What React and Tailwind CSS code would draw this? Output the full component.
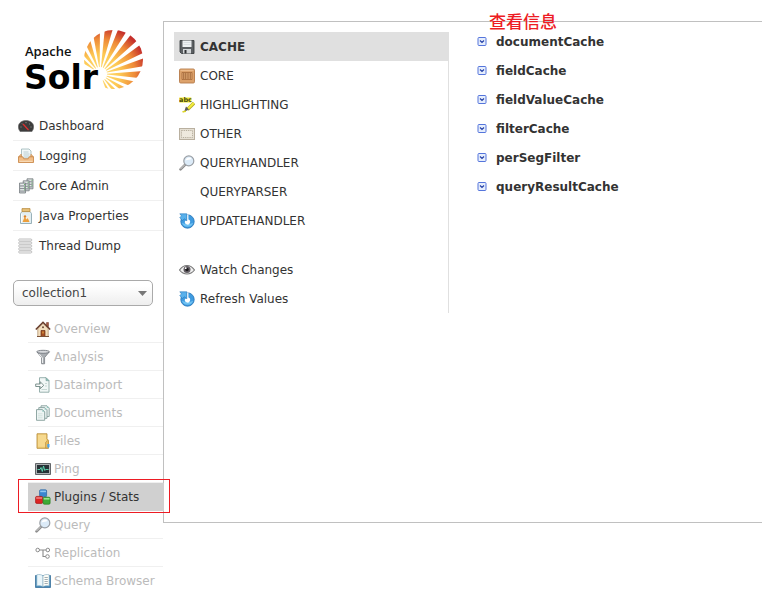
import React from "react";

const rad = (deg) => (deg * Math.PI) / 180;

function Logo() {
  const fx = 87;
  const fy = 54;
  const angles = [-143, -127, -111, -95, -79, -63, -47, -31, -15, 1, 17, 33, 49, 65];
  const ray = (a) => {
    const p = (r, d) =>
      `${(fx + r * Math.cos(rad(d))).toFixed(2)},${(fy + r * Math.sin(rad(d))).toFixed(2)}`;
    return `${p(7, a - 3)} ${p(70, a - 5)} ${p(70, a + 5)} ${p(7, a + 3)}`;
  };
  return (
    <svg width="150" height="91" viewBox="0 0 150 91" role="img" aria-label="Apache Solr">
      <defs>
        <radialGradient id="sun" gradientUnits="userSpaceOnUse" cx={fx} cy={fy} r="50">
          <stop offset="0" stopColor="#ffe07a" />
          <stop offset="0.4" stopColor="#fdc853" />
          <stop offset="0.7" stopColor="#ee8a38" />
          <stop offset="0.95" stopColor="#c52f2b" />
        </radialGradient>
        <clipPath id="disc">
          <circle cx="100.500" cy="39.500" r="29.500" />
        </clipPath>
      </defs>
      <g clipPath="url(#disc)" fill="url(#sun)">
        {angles.map((a) => (
          <polygon key={a} points={ray(a)} />
        ))}
      </g>
      <text x="12" y="36" fontSize="13" fontFamily="'Open Sans', 'DejaVu Sans', sans-serif" fontWeight="600" fill="#111">
        Apache
      </text>
      <text x="11" y="69" fontSize="33" fontFamily="'DejaVu Sans', sans-serif" fontWeight="700" fill="#000" stroke="#fff" strokeWidth="2" paintOrder="stroke">
        Solr
      </text>
    </svg>
  );
}

function Icon({ children, size = 16 }) {
  return (
    <svg width={size} height={size} viewBox="0 0 16 16" fill="none" className="shrink-0" aria-hidden="true">
      {children}
    </svg>
  );
}

const DashboardIcon = () => (
  <Icon>
    <path d="M2 13.5A8 8 0 0 1 .3 9C.3 5 3.600 2.500 8 2.500s7.700 2.500 7.700 6.500A8 8 0 0 1 14 13.500z" fill="#3c3c3c" stroke="#6a6a6a" strokeWidth=".6" />
    <path d="M2.500 9h1M4 5.500l.8.8M8 4v1.200M12 5.500l-.8.8M13.500 9h-1" stroke="#aaa" strokeWidth=".8" />
    <path d="M5 6l5.500 6" stroke="#e03030" strokeWidth="1.200" />
    <path d="M2 13.500h12" stroke="#777" strokeWidth=".8" />
  </Icon>
);
const LoggingIcon = () => (
  <Icon>
    <path d="M3.500 1h7.500l2 2v7H3.500z" fill="#f3f8f8" stroke="#9bb5b8" strokeWidth=".8" />
    <path d="M5.500 4h5M5.500 6h6M5.500 8h6" stroke="#a9c2c6" strokeWidth=".8" />
    <path d="M.5 9L2.500 6.500h1V9M15.500 9l-2-2.500h-.7V9" fill="#e7b27c" stroke="#c98d52" strokeWidth=".6" />
    <path d="M.5 8.800h4.300l1 2h4.400l1-2h4.300v5.700H.5z" fill="#f1bd86" stroke="#c5823f" strokeWidth=".8" />
    <path d="M1.500 13.300h13" stroke="#fae0c0" />
  </Icon>
);
const Tower = ({ x, y }) => (
  <g transform={`translate(${x} ${y})`}>
    <path d="M.5.5h6v10h-6z" fill="#c9cdd0" stroke="#777d82" strokeWidth=".8" />
    <path d="M1 3.500h5M1 6h5M1 8.500h5" stroke="#7b8287" strokeWidth=".8" />
    <path d="M1.500 2h3.500M1.500 4.800h3.500M1.500 7.300h3.500" stroke="#edf0f1" strokeWidth=".8" />
    <path d="M5 2h1M5 4.800h1M5 7.300h1" stroke="#55b457" strokeWidth=".8" />
  </g>
);
const CoreAdminIcon = () => (
  <Icon>
    <Tower x={8.500} y={0.300} />
    <Tower x={4.700} y={2.300} />
    <Tower x={1} y={4.500} />
  </Icon>
);
const JavaIcon = () => (
  <Icon>
    <path d="M4 3.500h8l1.500 2v10h-11v-10z" fill="#e2eef2" stroke="#8fa9b1" strokeWidth=".9" />
    <path d="M4 .6h8v3H4z" fill="#e8c178" stroke="#b88c3d" strokeWidth=".8" />
    <path d="M4.500 8h7v6h-7z" fill="#f6eee0" />
    <path d="M4.500 14l2.200-5 2 2.500 1-1.500 1.800 4z" fill="#ec9f3c" />
    <circle cx="7" cy="8.500" r="1.200" fill="#d9822b" />
    <path d="M3.700 6v8.500" stroke="#fff" />
  </Icon>
);
const ThreadIcon = () => (
  <Icon>
    {[1, 4, 7, 10, 13].map((y) => (
      <path key={y} d={`M1.500 ${y}h11.500c1.500.4 1 2-.5 2h-11c-1.200-.3-1.200-1.700 0-2z`} fill="#fafafa" stroke="#a5a5a5" strokeWidth=".7" />
    ))}
  </Icon>
);
const HouseIcon = () => (
  <Icon>
    <path d="M11.500 1.500h2v4h-2z" fill="#a5563f" stroke="#713625" strokeWidth=".5" />
    <path d="M2.800 7.500L8 2.500l5.200 5v8H2.800z" fill="#f3dfbf" stroke="#a98762" strokeWidth=".7" />
    <path d="M.8 8.500L8 1.300l7.200 7.200" stroke="#673b2a" strokeWidth="1.500" />
    <path d="M6 9.500h4v6H6z" fill="#a34f25" stroke="#6b3015" strokeWidth=".7" />
    <path d="M7.500 10.500h1v2h-1z" fill="#f5b84a" />
    <circle cx="8" cy="6.300" r="1" fill="#6d4b3a" />
    <path d="M2 15.500h12" stroke="#7a5238" />
  </Icon>
);
const FunnelIcon = () => (
  <Icon>
    <path d="M2 3l4.600 5.500v6.300h3V8.500L14.200 3z" fill="#a9adb1" stroke="#777c82" strokeWidth=".8" />
    <path d="M4.300 5l3.200 4v5" stroke="#eceeef" />
    <ellipse cx="8.100" cy="2.800" rx="6.400" ry="1.500" fill="#d8dadd" stroke="#777c82" strokeWidth=".9" />
  </Icon>
);
const ImportIcon = () => (
  <Icon>
    <path d="M4.500.7h6.500l3 3v11.500H4.500z" fill="#f1f7f6" stroke="#8ca8a5" strokeWidth=".9" />
    <path d="M11 .7v3h3z" fill="#8fc6bf" stroke="#789b96" strokeWidth=".6" />
    <path d="M6.500 12.500h5.500M10 6.500h2M10 9h2" stroke="#bccfcc" strokeWidth=".8" />
    <path d="M.7 7h4.500V4.800l3.600 3.500-3.600 3.400V9.500H.7z" fill="#f8fafa" stroke="#6f8782" strokeWidth=".9" />
  </Icon>
);
const DocsIcon = () => (
  <Icon>
    {[[5.500, 0], [3.300, 1.800], [1, 3.800]].map(([x, y]) => (
      <g key={x} transform={`translate(${x} ${y})`}>
        <path d="M.5.8h6l2.200 2.200v8.500H.5z" fill="#eef5f4" stroke="#849e9b" strokeWidth=".9" />
        <path d="M6.300.8V3h2.200z" fill="#95c8c1" />
        <path d="M2 5h4.500M2 7h4.500M2 9h4.500" stroke="#c7d8d6" strokeWidth=".7" />
      </g>
    ))}
  </Icon>
);
const FilesIcon = () => (
  <Icon>
    <path d="M2 .8h10v5l1.500 1.500v8H2z" fill="#f1cc75" stroke="#ba9141" strokeWidth=".9" />
    <path d="M3 1.800h8v12H3z" fill="#f6d98f" />
    <path d="M10.500 15V9.500l2-2 1 1V15z" fill="#e5b95a" stroke="#b78f42" strokeWidth=".6" />
    <path d="M12.300 11h2.200v3l-1.100 1-1.100-1z" fill="#4ea4ec" />
  </Icon>
);
const PingIcon = () => (
  <Icon>
    <path d="M.5 2.500h15v11H.5z" fill="#aeb1b3" stroke="#55595c" strokeWidth=".9" />
    <path d="M2 4h12v8H2z" fill="#273236" />
    <path d="M2.500 8.500h2.500l1-2 1.300 4L8.500 5l1.300 4.500.8-1h3" stroke="#5cdcb5" strokeWidth=".9" />
  </Icon>
);
const Block = ({ x, y, top, face, edge }) => (
  <g transform={`translate(${x} ${y})`}>
    <rect x=".4" y=".4" width="7" height="7" rx="1.200" fill={face} stroke={edge} strokeWidth=".7" />
    <path d="M1 1.200h5.800v1.600H1z" fill={top} />
  </g>
);
const BlocksIcon = () => (
  <Icon>
    <Block x={4.200} y={0.400} top="#90c7f2" face="#3b86d1" edge="#2a64a3" />
    <Block x={0.200} y={7} top="#f27d7d" face="#dd2525" edge="#a51616" />
    <Block x={7.700} y={7.800} top="#9be38d" face="#3cab35" edge="#27801f" />
  </Icon>
);
const LensIcon = () => (
  <Icon>
    <path d="M1.500 14.300L6 9.800" stroke="#8c8c8c" strokeWidth="2.600" strokeLinecap="round" />
    <path d="M1.700 13.800L5.700 9.800" stroke="#d5d5d5" strokeLinecap="round" />
    <circle cx="9.800" cy="5.900" r="5" fill="#dcebf8" stroke="#9a9fa5" strokeWidth="1.200" />
    <path d="M6.500 5.500a3.500 3.500 0 0 1 6-1.800c-1.500 1.700-3.700.7-6 1.800z" fill="#fff" />
  </Icon>
);
const ReplicationIcon = () => (
  <Icon>
    <path d="M4.500 5h7M8 5v6.500h3" stroke="#8b8b8b" strokeWidth="1.100" />
    <circle cx="2.700" cy="5" r="1.800" fill="#fff" stroke="#8b8b8b" />
    <circle cx="12.800" cy="5" r="1.800" fill="#fff" stroke="#8b8b8b" />
    <circle cx="12.500" cy="11.500" r="1.800" fill="#fff" stroke="#8b8b8b" />
  </Icon>
);
const BookIcon = () => (
  <Icon>
    <path d="M.5 2.500h15v12H.5z" fill="#3f86b8" stroke="#2d6690" strokeWidth=".7" />
    <path d="M1.800 1.800C4 1.200 6.500 1.500 8 2.800v11c-1.500-1-4-1.200-6.200-.8z" fill="#eaf6fb" stroke="#7fa8bd" strokeWidth=".6" />
    <path d="M14.200 1.800C12 1.200 9.500 1.500 8 2.800v11c1.500-1 4-1.200 6.200-.8z" fill="#fdfdf7" stroke="#7fa8bd" strokeWidth=".6" />
    <path d="M9.500 4.500h3.300M9.500 6.500h3.300M9.500 8.500h3.300M9.500 10.500h3.300" stroke="#8b9aa3" strokeWidth=".8" />
  </Icon>
);
const DiskIcon = () => (
  <Icon>
    <path d="M1 1.500h14v13H2.500L1 13z" fill="#5c6063" stroke="#3b3f42" strokeWidth=".9" />
    <path d="M3.500 1.500h9v6.500h-9z" fill="#eef1f2" />
    <path d="M4.500 3.500h7M4.500 5.500h7" stroke="#d3d9dc" strokeWidth=".8" />
    <path d="M4 10h8v4.500H4z" fill="#d3d6d8" />
    <path d="M5.500 11h2v3.500h-2z" fill="#2d3032" />
  </Icon>
);
const CrateIcon = () => (
  <Icon>
    <rect x=".5" y="1" width="15" height="14" rx="1.200" fill="#dda26b" stroke="#b57a4a" strokeWidth=".9" />
    <path d="M1.500 2.300h13" stroke="#f0c193" />
    <path d="M3 4.500h10v7H3z" fill="#e3ab75" stroke="#a4683a" strokeWidth=".8" />
    <path d="M4.800 5v6M6.800 5v6M9 5v6M11.200 5v6" stroke="#935a2f" strokeWidth=".9" />
  </Icon>
);
const HighlightIcon = () => (
  <Icon>
    <path d="M.3.500h12v5H.3z" fill="#f1ea2d" />
    <text x="0" y="5" fontSize="6.500" fontFamily="'DejaVu Sans', sans-serif" fontWeight="700" fill="#4b4a18">abc</text>
    <path d="M15 6l-6.500 6.500" stroke="#b3ac23" strokeWidth="3.400" />
    <path d="M14.700 6l-6 6" stroke="#f3ec3d" strokeWidth="2" />
    <path d="M7 9.500l3 3-5 2.500z" fill="#5c5c5c" />
    <path d="M3.500 15c1.500-.8 2-.8 3.500-.8" stroke="#ddd62a" strokeWidth="1.500" />
  </Icon>
);
const OtherIcon = () => (
  <Icon>
    <rect x=".5" y="2.500" width="15" height="11" fill="#e5dfd3" stroke="#b9b0a0" />
    <rect x="2.500" y="4.500" width="11" height="7" fill="#eee9de" stroke="#a89f8f" strokeWidth=".8" strokeDasharray="1.200 1" />
  </Icon>
);
const RefreshIcon = () => (
  <Icon>
    <circle cx="8.500" cy="8.500" r="6.700" fill="#3f9be0" stroke="#2473b6" strokeWidth=".8" />
    <path d="M2.800 9.500a6 6 0 0 0 11.500 0c-3 2-8.500 2-11.500 0z" fill="#6fc2f3" />
    <path d="M7.700 1.500h1.700v5a2.600 2.600 0 1 1-3.300 1.400l1.600-1z" fill="#fff" />
    <path d="M.8.800h7v7L5.500 5.800 3.300 7.500.8 4.600l1.700-1.700z" fill="#58b1ec" stroke="#2878ba" strokeWidth=".6" />
  </Icon>
);
const EyeIcon = () => (
  <Icon>
    <path d="M.5 8C3 4.300 5.500 3.500 8 3.500s5 .8 7.500 4.500c-2.500 3.300-5 4-7.500 4S3 11.300.5 8z" fill="#f0f0f0" stroke="#777" strokeWidth="1.200" />
    <circle cx="8" cy="7.500" r="3.500" fill="#625d63" />
    <circle cx="8" cy="7.500" r="1.700" fill="#1c1a1d" />
    <circle cx="6.700" cy="6.200" r=".9" fill="#fff" />
  </Icon>
);
const ToggleIcon = () => (
  <svg width="11" height="11" viewBox="0 0 11 11" fill="none" className="shrink-0" aria-hidden="true">
    <rect x="1" y="1.500" width="8" height="8" rx="1" fill="#e6eefc" stroke="#5575dc" />
    <path d="M3 4.500l2 2 2-2" stroke="#2743a8" strokeWidth="1.200" />
  </svg>
);

const mainItems = [
  ["Dashboard", DashboardIcon],
  ["Logging", LoggingIcon],
  ["Core Admin", CoreAdminIcon],
  ["Java Properties", JavaIcon],
  ["Thread Dump", ThreadIcon],
];
const coreItems = [
  ["Overview", HouseIcon],
  ["Analysis", FunnelIcon],
  ["Dataimport", ImportIcon],
  ["Documents", DocsIcon],
  ["Files", FilesIcon],
  ["Ping", PingIcon],
  ["Plugins / Stats", BlocksIcon],
  ["Query", LensIcon],
  ["Replication", ReplicationIcon],
  ["Schema Browser", BookIcon],
];
const categories = [
  ["CACHE", DiskIcon],
  ["CORE", CrateIcon],
  ["HIGHLIGHTING", HighlightIcon],
  ["OTHER", OtherIcon],
  ["QUERYHANDLER", LensIcon],
  ["QUERYPARSER", null],
  ["UPDATEHANDLER", RefreshIcon],
];
const caches = ["documentCache", "fieldCache", "fieldValueCache", "filterCache", "perSegFilter", "queryResultCache"];

const rowClass = "flex h-[29px] w-full items-center gap-[5px] pl-[5px] text-left";

export default function App() {
  return (
    <div className="flex items-start bg-white pt-5 font-['DejaVu_Sans',Verdana,sans-serif] text-xs text-[#333]">
      <aside className="relative z-10 w-[163px] shrink-0 pl-[13px]">
        <a href="#home" className="block">
          <Logo />
        </a>
        <nav aria-label="Main">
          <ul>
            {mainItems.map(([label, Glyph]) => (
              <li key={label} className="border-b border-[#f0f0f0] last:border-b-0">
                <a href={`#${label}`} className={rowClass}>
                  <Glyph />
                  {label}
                </a>
              </li>
            ))}
          </ul>
        </nav>
        <div className="relative mt-5 mr-[10px]">
          <select
            aria-label="Core selector"
            defaultValue="collection1"
            className="h-[26px] w-full appearance-none rounded-[5px] border border-[#aaa] bg-linear-to-b from-white from-20% to-[#eee] pl-2 text-xs text-[#444]"
          >
            <option>collection1</option>
          </select>
          <svg width="9" height="5" viewBox="0 0 9 5" className="pointer-events-none absolute top-[11px] right-[6px]" aria-hidden="true">
            <path d="M0 0h9L4.500 5z" fill="#777" />
          </svg>
        </div>
        <nav aria-label="Core" className="mt-[9px] pl-[15px]">
          <ul>
            {coreItems.map(([label, Glyph]) => {
              const active = label === "Plugins / Stats";
              return (
                <li
                  key={label}
                  className={
                    active
                      ? "relative -mr-px border-b border-[#d0d0d0] bg-[#d0d0d0] text-[#333]"
                      : "border-b border-[#f0f0f0] text-[#bbb] last:border-b-0"
                  }
                >
                  <a href={`#${label}`} className="flex h-[27px] items-center gap-[3px] pl-[7px] whitespace-nowrap">
                    <Glyph />
                    {label}
                  </a>
                  {active && (
                    <span className="pointer-events-none absolute -top-1 -right-[6px] -bottom-[3px] -left-[10px] border border-[#ed1c24]" />
                  )}
                </li>
              );
            })}
          </ul>
        </nav>
      </aside>

      <main className="relative mt-px flex min-h-[502px] grow items-start border border-r-0 border-[#c0c0c0] pl-[10px]">
        <p className="absolute -top-[13px] left-[325px] font-['Noto_Sans_CJK_SC',sans-serif] text-[17px] leading-6 font-medium text-[#ed1c24]">
          查看信息
        </p>
        <div className="mt-[10px] w-[275px] shrink-0 border-r border-[#e0e0e0]">
          <ul>
            {categories.map(([label, Glyph], i) => (
              <li key={label} className={i === 0 ? "bg-[#e0e0e0] font-bold" : ""}>
                <a href={`#${label}`} className={rowClass}>
                  {Glyph ? <Glyph /> : <span className="w-4" />}
                  {label}
                </a>
              </li>
            ))}
          </ul>
          <div className="mt-5">
            <button type="button" className={rowClass}>
              <EyeIcon />
              Watch Changes
            </button>
            <button type="button" className={rowClass}>
              <RefreshIcon />
              Refresh Values
            </button>
          </div>
        </div>
        <ul className="mt-[5px] grow pl-7 font-bold">
          {caches.map((name) => (
            <li key={name}>
              <a href={`#${name}`} className="flex h-[29px] items-center gap-2">
                <ToggleIcon />
                {name}
              </a>
            </li>
          ))}
        </ul>
      </main>
    </div>
  );
}
